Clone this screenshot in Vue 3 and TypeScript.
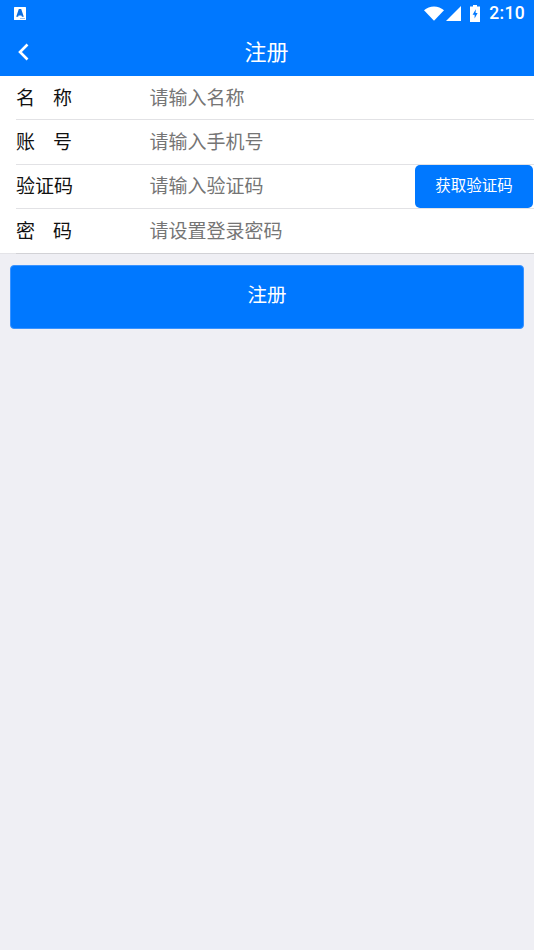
<script setup lang="ts">
interface Row { label: string; placeholder: string; code?: boolean }
const rows: Row[] = [
  { label: '名称', placeholder: '请输入名称' },
  { label: '账号', placeholder: '请输入手机号' },
  { label: '验证码', placeholder: '请输入验证码', code: true },
  { label: '密码', placeholder: '请设置登录密码' },
]
</script>

<template>
  <div class="page">
    <header class="header">
      <div class="status">
        <svg class="app-icon" viewBox="0 0 12 13" width="12" height="13">
          <rect width="12" height="13" rx="0.5" fill="#fff" />
          <path d="M4.800 2h2.400L9.800 9.800H7.900L7.400 8.400H4.600L4.100 9.800H2.200z" fill="#0d6fe0" />
          <rect x="6" y="11" width="5" height="1" fill="#9cc4f0" />
        </svg>
        <div class="status-right">
          <svg viewBox="0 0 20 15" width="20" height="15">
            <path d="M0 4.200C2.800 1.700 6.200 0.400 10 0.400s7.200 1.300 10 3.800L10 14.800z" fill="#fff" />
          </svg>
          <svg class="signal" viewBox="0 0 15 15" width="15" height="15">
            <path d="M15 0V15H0z" fill="#fff" />
          </svg>
          <svg class="battery" viewBox="0 0 10 17" width="10" height="17">
            <path fill-rule="evenodd" d="M3 0h4v1.500h3V17H0V1.500h3zM5.800 4.200L2.600 9.800h2v3.700l3-5.600h-2z" fill="#fff" />
          </svg>
          <span class="time">2:10</span>
        </div>
      </div>
      <div class="nav">
        <svg class="back" viewBox="0 0 12 18" width="12" height="18">
          <path d="M10.500 1.500L3 9l7.500 7.500" fill="none" stroke="#fff" stroke-width="2.600" />
        </svg>
        <h1 class="title">注册</h1>
      </div>
    </header>

    <form class="form" @submit.prevent>
      <div v-for="row in rows" :key="row.label" class="row">
        <span class="label" :class="{ spaced: row.label.length === 2 }">{{ row.label }}</span>
        <span class="placeholder">{{ row.placeholder }}</span>
        <button v-if="row.code" class="code-btn" type="button">获取验证码</button>
      </div>
    </form>

    <button class="submit" type="button">注册</button>
  </div>
</template>

<style>
html, body { margin: 0; background: #efeff4; }
</style>

<style scoped>
.page {
  width: 534px;
  height: 950px;
  background: #efeff4;
  font-family: "Noto Sans CJK SC", "Noto Sans", sans-serif;
  overflow: hidden;
}
.header {
  background: #0078ff;
  height: 76px;
  box-shadow: 0 1px 2px rgba(0, 0, 0, .18);
  position: relative;
}
.status {
  height: 26px;
  display: flex;
  align-items: center;
  justify-content: space-between;
  padding: 0 9px 0 14px;
}
.app-icon { margin-top: 1px; }
.status-right { display: flex; align-items: center; }
.signal { margin-left: 2px; }
.battery { margin-left: 9px; }
.time {
  margin-left: 9px;
  color: #fff;
  font: 500 17.500px/26px Roboto, sans-serif;
  letter-spacing: .3px;
}
.nav {
  height: 50px;
  display: flex;
  align-items: center;
  justify-content: center;
  position: relative;
}
.back { position: absolute; left: 17px; top: 17px; }
.title {
  margin: 0 1px 2px 0;
  color: #fff;
  font-size: 22px;
  font-weight: 400;
  line-height: 48px;
}
.form {
  background: #fff;
  padding-left: 16px;
  position: relative;
}
.form::after {
  content: "";
  position: absolute;
  left: 0;
  bottom: 0;
  width: 16px;
  height: 1px;
  background: #e4e4e8;
}
.row {
  height: 44.250px;
  display: flex;
  align-items: center;
  position: relative;
  box-sizing: border-box;
  padding-bottom: 2px;
  border-bottom: 1px solid #e2e2e5;
}
.row:last-child {
  height: 45.250px;
  border-bottom-color: #d2d2d6;
}
.label {
  width: 133.500px;
  font-size: 19px;
  color: #111;
  line-height: 24px;
}
.label.spaced { letter-spacing: 18px; }
.placeholder {
  font-size: 19px;
  color: #757575;
  line-height: 24px;
}
.code-btn {
  position: absolute;
  right: 1px;
  top: 0;
  width: 118px;
  height: 43.500px;
  border: 0;
  border-radius: 5px;
  background: #0078ff;
  color: #fff;
  font: 400 15.500px/1 "Noto Sans CJK SC", sans-serif;
  padding: 0 0 4px;
}
.submit {
  display: block;
  margin: 11px 0 0 10px;
  width: 514px;
  height: 64px;
  border: 1px solid #3a93ff;
  border-radius: 4px;
  background: #0078ff;
  color: #fff;
  font: 400 19.500px/1 "Noto Sans CJK SC", sans-serif;
  padding: 0 0 6px;
  box-sizing: border-box;
}
</style>
